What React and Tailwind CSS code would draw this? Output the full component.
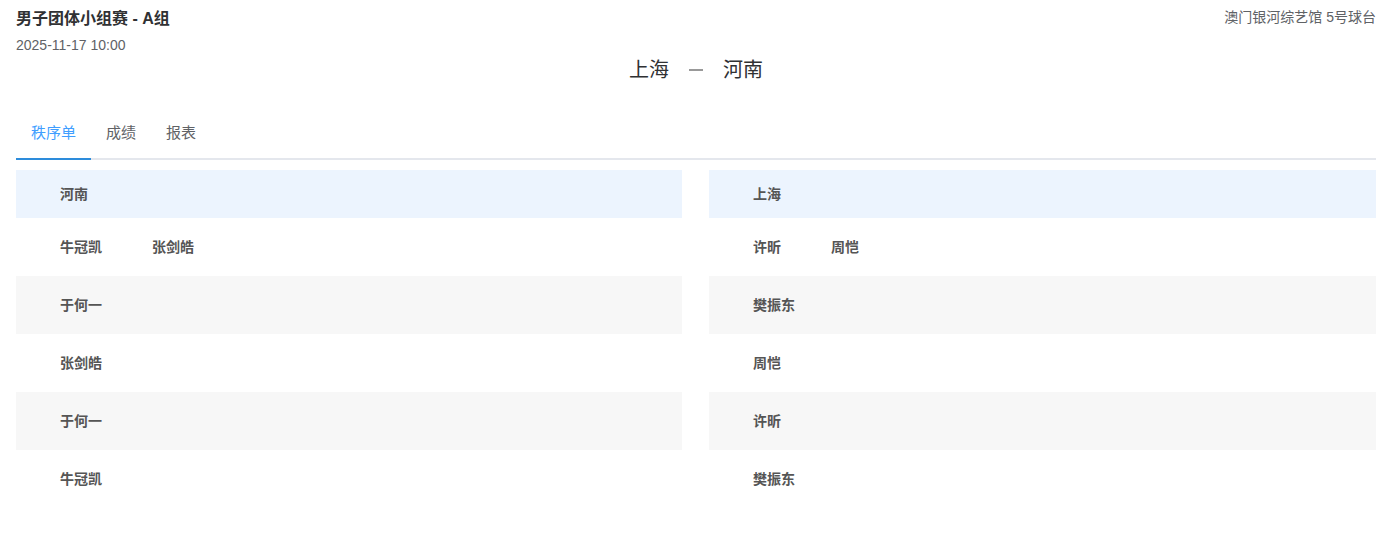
export default function App() {
  const font = { fontFamily: '"Liberation Sans", "Noto Sans CJK SC", sans-serif' };
  const left = {
    team: "河南",
    rows: [["牛冠凯", "张剑皓"], ["于何一"], ["张剑皓"], ["于何一"], ["牛冠凯"]],
  };
  const right = {
    team: "上海",
    rows: [["许昕", "周恺"], ["樊振东"], ["周恺"], ["许昕"], ["樊振东"]],
  };
  const Table = ({ data }) => (
    <div className="flex flex-col">
      <div className="h-[48px] bg-[#ecf4fe] flex items-center pl-[44px] text-[14px] font-bold text-[#555]">
        {data.team}
      </div>
      {data.rows.map((r, i) => (
        <div
          key={i}
          className={
            "h-[58px] flex items-center pl-[44px] text-[14px] font-bold text-[#555] gap-[50px] " +
            (i % 2 === 1 ? "bg-[#f7f7f7]" : "bg-white")
          }
        >
          {r.map((n, j) => (
            <span key={j}>{n}</span>
          ))}
        </div>
      ))}
    </div>
  );
  return (
    <div className="w-[1387px] h-[543px] bg-white pl-[16px] pr-[11px] pt-[8px]" style={font}>
      <div className="flex justify-between items-start">
        <div>
          <div className="text-[16px] font-bold text-[#303133] leading-[22px]">男子团体小组赛 - A组</div>
          <div className="text-[14px] text-[#606266] leading-[18px] mt-[6px]">2025-11-17 10:00</div>
        </div>
        <div className="text-[14px] text-[#606266] leading-[18px] mt-[0px]">澳门银河综艺馆 5号球台</div>
      </div>
      <div className="flex justify-center items-center text-[20px] text-[#303133] leading-[28px] mt-[2px]">
        <span>上海</span>
        <span className="mx-[20px] w-[14px] h-[2px] bg-[#999] inline-block"></span>
        <span>河南</span>
      </div>
      <div className="mt-[24px] flex border-b-2 border-[#e4e7ed] h-[52px]">
        <div className="px-[15px] text-[15px] text-[#409eff] flex items-center border-b-2 border-[#2d8cdb] -mb-[2px]">秩序单</div>
        <div className="px-[15px] text-[15px] text-[#606266] flex items-center">成绩</div>
        <div className="px-[15px] text-[15px] text-[#606266] flex items-center">报表</div>
      </div>
      <div className="mt-[10px] grid grid-cols-[666px_667px] gap-[27px]">
        <Table data={left} />
        <Table data={right} />
      </div>
    </div>
  );
}
